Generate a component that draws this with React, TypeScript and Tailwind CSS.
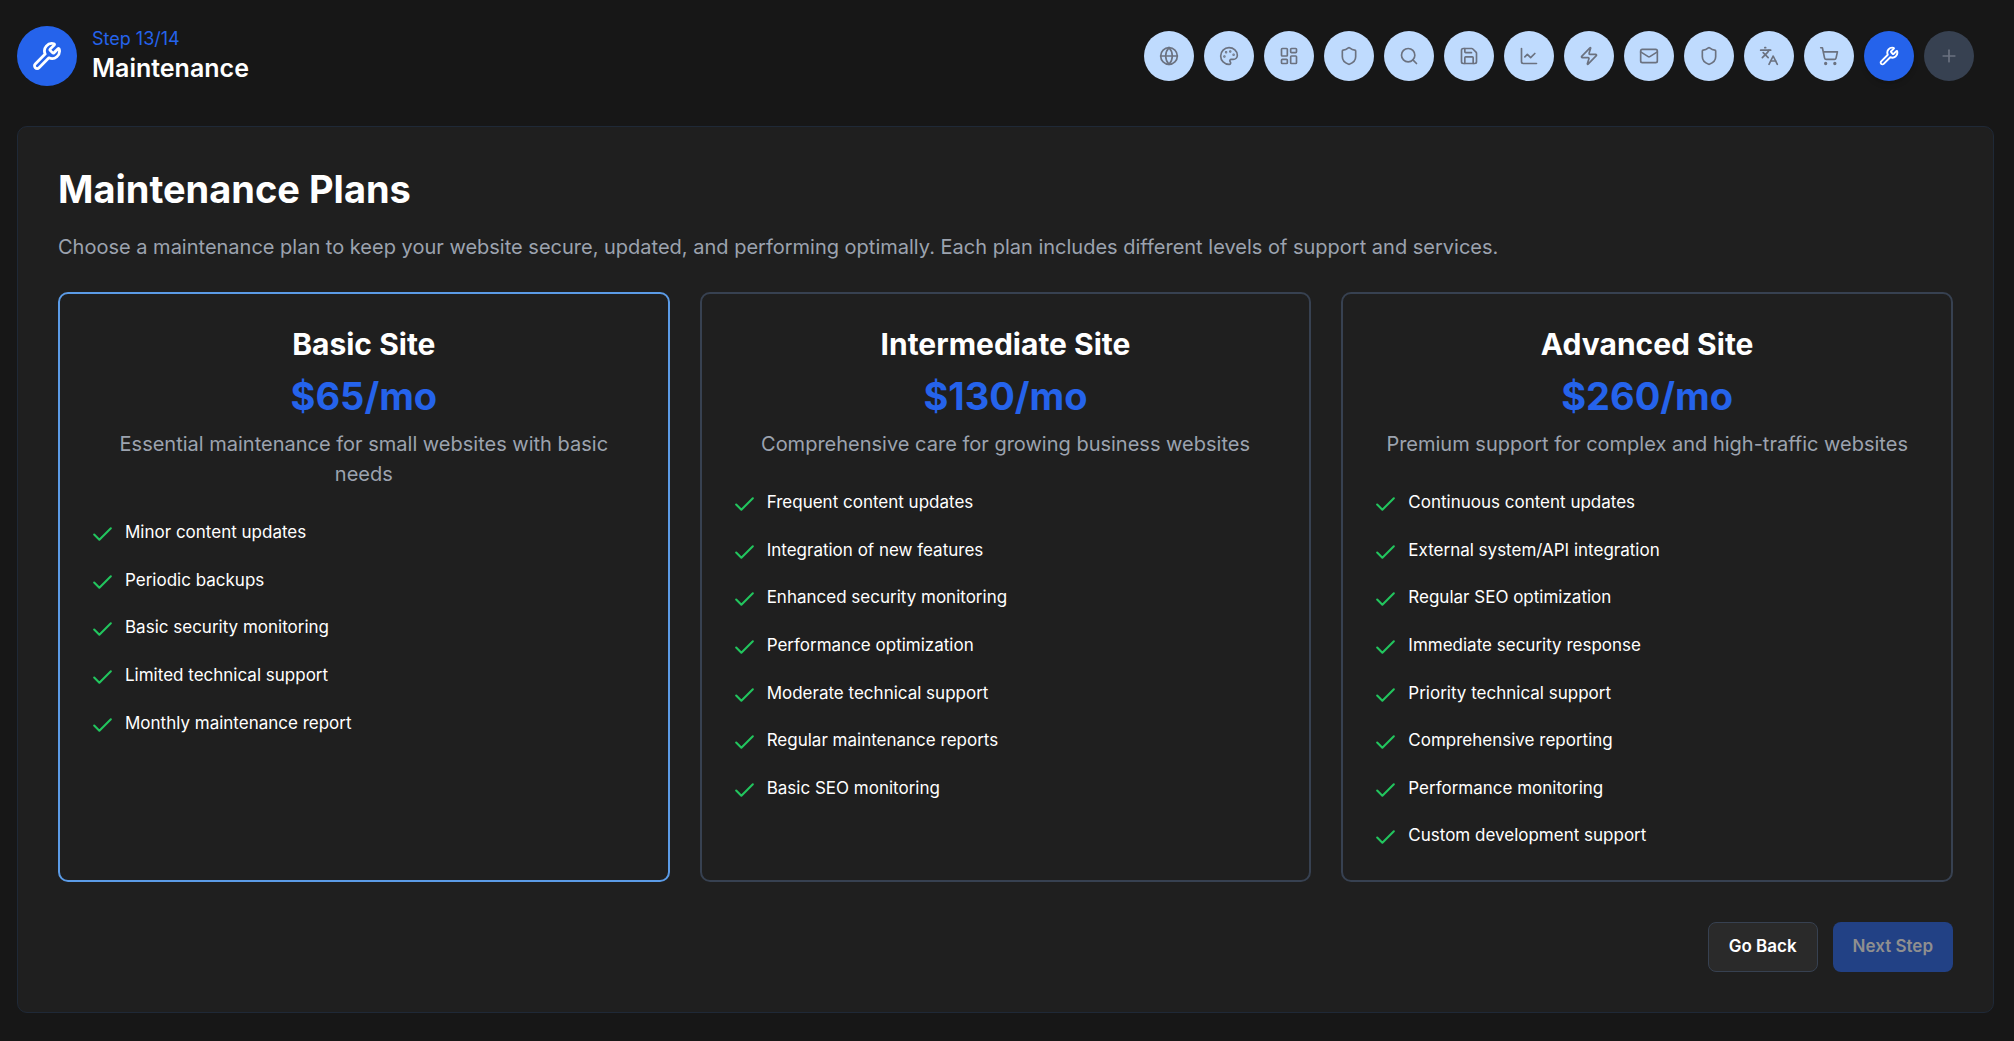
import {
  Check, Globe, Palette, LayoutDashboard, Shield, Search, Save, ChartLine, Zap, Mail, Languages, ShoppingCart, Wrench, Plus,
} from "lucide-react";
import type { LucideIcon } from "lucide-react";

const steps: { label: string; icon: LucideIcon }[] = [
  { label: "Domain", icon: Globe },
  { label: "Design", icon: Palette },
  { label: "Layout", icon: LayoutDashboard },
  { label: "Security", icon: Shield },
  { label: "Search", icon: Search },
  { label: "Backups", icon: Save },
  { label: "Analytics", icon: ChartLine },
  { label: "Performance", icon: Zap },
  { label: "Email", icon: Mail },
  { label: "Privacy", icon: Shield },
  { label: "Languages", icon: Languages },
  { label: "Commerce", icon: ShoppingCart },
  { label: "Maintenance", icon: Wrench },
  { label: "Extras", icon: Plus },
];
const currentStep = 12;

const plans = [
  {
    name: "Basic Site",
    price: "$65/mo",
    description: "Essential maintenance for small websites with basic needs",
    features: [
      "Minor content updates",
      "Periodic backups",
      "Basic security monitoring",
      "Limited technical support",
      "Monthly maintenance report",
    ],
  },
  {
    name: "Intermediate Site",
    price: "$130/mo",
    description: "Comprehensive care for growing business websites",
    features: [
      "Frequent content updates",
      "Integration of new features",
      "Enhanced security monitoring",
      "Performance optimization",
      "Moderate technical support",
      "Regular maintenance reports",
      "Basic SEO monitoring",
    ],
  },
  {
    name: "Advanced Site",
    price: "$260/mo",
    description: "Premium support for complex and high-traffic websites",
    features: [
      "Continuous content updates",
      "External system/API integration",
      "Regular SEO optimization",
      "Immediate security response",
      "Priority technical support",
      "Comprehensive reporting",
      "Performance monitoring",
      "Custom development support",
    ],
  },
];

function StepButton({ index }: { index: number }) {
  const { label, icon: Icon } = steps[index];
  const isCurrent = index === currentStep;
  const tone = isCurrent
    ? "bg-[#2563eb] text-white shadow-md"
    : index < currentStep
      ? "bg-[#bfdbfe] text-[#6b7280]"
      : "bg-[#374151] text-[#6b7280]";
  return (
    <button
      type="button"
      aria-label={label}
      aria-current={isCurrent ? "step" : undefined}
      className={`flex size-[50px] items-center justify-center rounded-full ${tone}`}
    >
      <Icon className="size-5" strokeWidth={isCurrent ? 2.25 : 2} />
    </button>
  );
}

export default function App() {
  return (
    <div className="min-h-screen bg-[#171717] pt-[26px] pr-5 pb-7 pl-[17px] font-['Inter',sans-serif] text-white">
      <header className="flex items-center justify-between pr-5">
        <div className="flex items-center gap-[15px]">
          <div className="flex size-[60px] items-center justify-center rounded-full bg-[#2563eb]">
            <Wrench className="size-[30px]" strokeWidth={2.25} />
          </div>
          <div>
            <p className="text-[18px] leading-[25px] text-[#2563eb]">Step 13/14</p>
            <h2 className="text-[25px] leading-[35px] font-semibold">Maintenance</h2>
          </div>
        </div>
        <nav aria-label="Steps" className="flex gap-2.5">
          {steps.map((step, index) => (
            <StepButton key={step.label} index={index} />
          ))}
        </nav>
      </header>

      <main className="mt-10 rounded-[10px] border border-[#1f2937] bg-[#1f1f1f] p-10">
        <h1 className="text-[38px] leading-[45px] font-bold">Maintenance Plans</h1>
        <p className="mt-5 text-[20px] leading-[30px] text-[#9ca3af]">
          Choose a maintenance plan to keep your website secure, updated, and performing optimally. Each plan includes
          different levels of support and services.
        </p>

        <div className="mt-[30px] grid grid-cols-3 gap-[30px]">
          {plans.map((plan, index) => (
            <button
              type="button"
              key={plan.name}
              aria-pressed={index === 0}
              className={`flex flex-col rounded-[10px] border-2 p-[30px] text-left ${index === 0 ? "border-[#5b9be6]" : "border-[#374151]"}`}
            >
              <div className="w-full text-center">
                <h3 className="text-[30px] leading-[40px] font-bold">{plan.name}</h3>
                <p className="mt-2.5 text-[38px] leading-[45px] font-bold text-[#2563eb]">{plan.price}</p>
                <p className="mt-2.5 text-[20px] leading-[30px] text-[#9ca3af]">{plan.description}</p>
              </div>
              <ul className="mt-[30px] flex flex-col gap-5">
                {plan.features.map((feature) => (
                  <li key={feature} className="flex items-start gap-2.5 text-[17px] leading-relaxed">
                    <Check className="mt-[3px] -mb-1 size-[25px] shrink-0 text-[#22c55e]" />
                    <span>{feature}</span>
                  </li>
                ))}
              </ul>
            </button>
          ))}
        </div>

        <div className="mt-10 flex justify-end gap-[15px]">
          <button
            type="button"
            className="h-[50px] rounded-lg border border-[#374151] bg-[#2a2a2a] px-5 text-[17px] font-semibold"
          >
            Go Back
          </button>
          <button
            type="button"
            disabled
            className="h-[50px] rounded-lg bg-[#224185] px-5 text-[17px] font-semibold text-[#8f8f8f]"
          >
            Next Step
          </button>
        </div>
      </main>
    </div>
  );
}
